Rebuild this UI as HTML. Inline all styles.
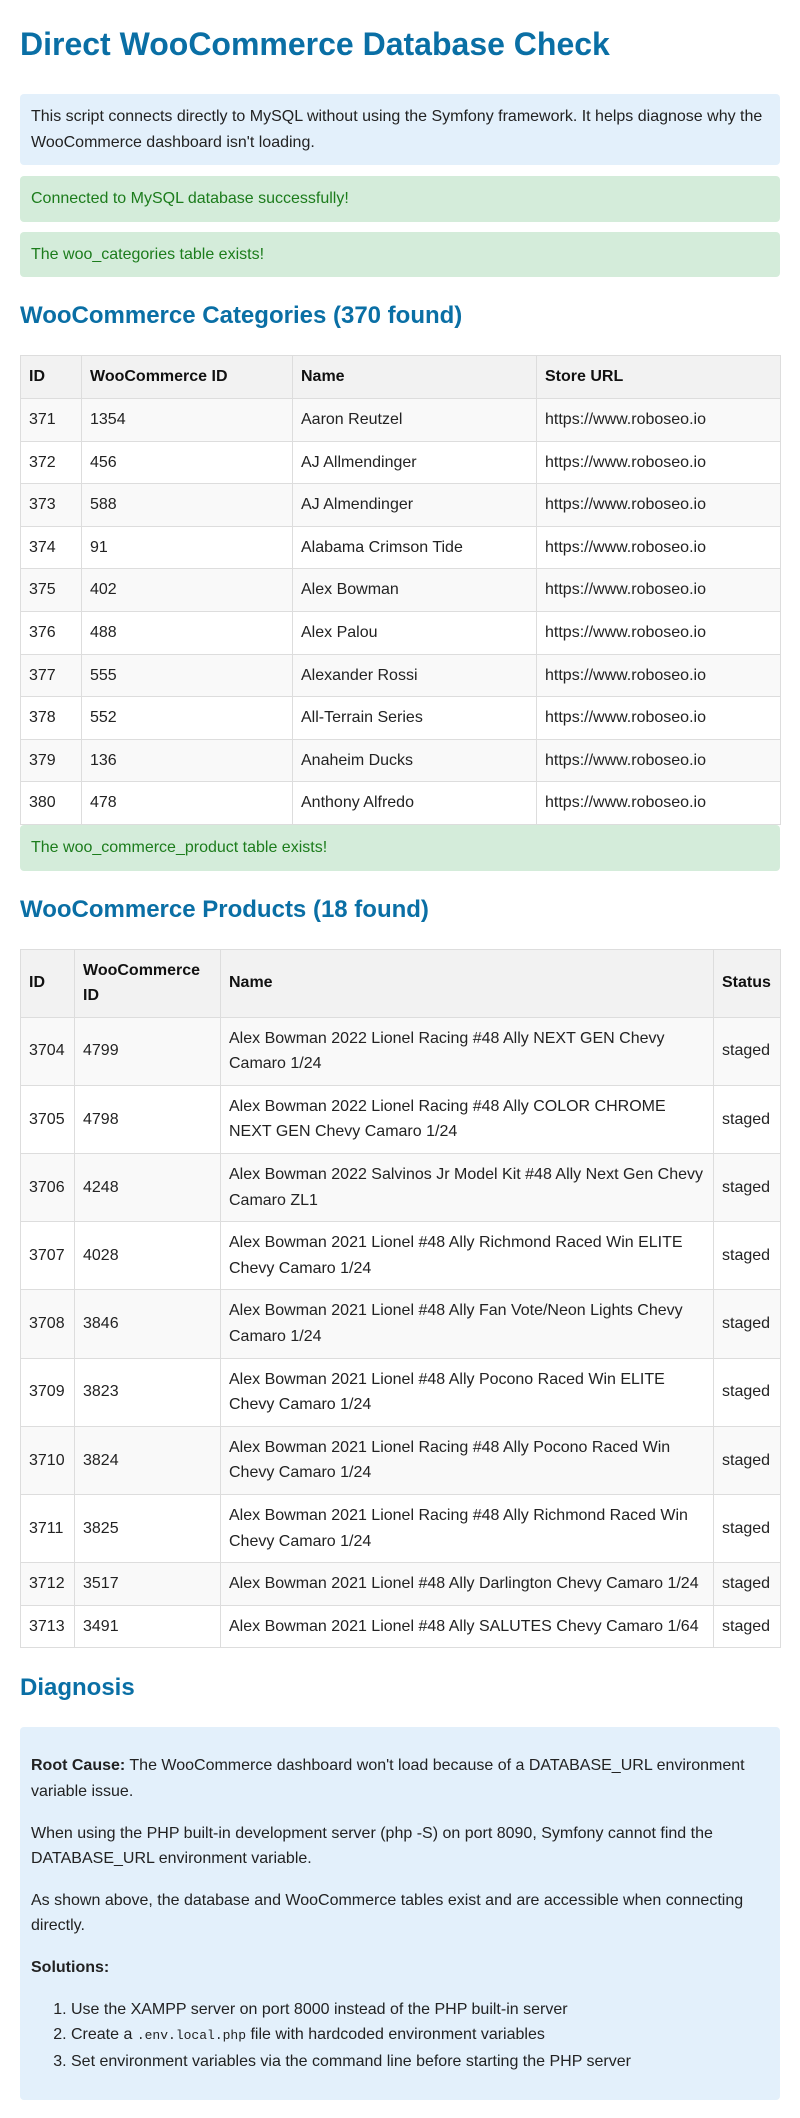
<!DOCTYPE html>
<html><head><meta charset="utf-8">
<style>
html,body{margin:0;padding:0;background:#fff}
body{font-family:"Liberation Sans",Arial,sans-serif;font-size:16px;line-height:25.6px;color:#222;padding:0 20px;width:760px}
h1{font-size:32px;line-height:37px;color:#0a6fa5;margin:0;padding-top:26px;margin-bottom:31px;font-weight:bold}
h2{font-size:24px;line-height:28px;color:#0a6fa5;margin:25px 0;font-weight:bold}
.info{background:#e3f0fb;padding:10px 11px;border-radius:4px;margin-bottom:11px}
.ok{background:#d4ecda;color:#1c7c1c;padding:10px 11px;border-radius:4px;margin-bottom:10px}
table{border-collapse:collapse;table-layout:fixed;width:760px}
th,td{border:1px solid #ddd;padding:8px;text-align:left;vertical-align:middle}
th{background:#f2f2f2;font-weight:bold;color:#111}
tr:nth-child(even) td{background:#f9f9f9}
.diag{background:#e3f0fb;padding:10px 11px;border-radius:4px}
.diag p{margin:16px 0}
.diag ol{margin:16px 0;padding-left:40px}
code{font-family:"Liberation Mono",monospace;font-size:13px}
</style></head><body>
<h1>Direct WooCommerce Database Check</h1>
<div class="info">This script connects directly to MySQL without using the Symfony framework. It helps diagnose why the WooCommerce dashboard isn't loading.</div>
<div class="ok">Connected to MySQL database successfully!</div>
<div class="ok">The woo_categories table exists!</div>
<h2>WooCommerce Categories (370 found)</h2>
<table>
<colgroup><col style="width:61px"><col style="width:211px"><col style="width:244px"><col style="width:244px"></colgroup>
<tr><th>ID</th><th>WooCommerce ID</th><th>Name</th><th>Store URL</th></tr>
<tr><td>371</td><td>1354</td><td>Aaron Reutzel</td><td>https://www.roboseo.io</td></tr>
<tr><td>372</td><td>456</td><td>AJ Allmendinger</td><td>https://www.roboseo.io</td></tr>
<tr><td>373</td><td>588</td><td>AJ Almendinger</td><td>https://www.roboseo.io</td></tr>
<tr><td>374</td><td>91</td><td>Alabama Crimson Tide</td><td>https://www.roboseo.io</td></tr>
<tr><td>375</td><td>402</td><td>Alex Bowman</td><td>https://www.roboseo.io</td></tr>
<tr><td>376</td><td>488</td><td>Alex Palou</td><td>https://www.roboseo.io</td></tr>
<tr><td>377</td><td>555</td><td>Alexander Rossi</td><td>https://www.roboseo.io</td></tr>
<tr><td>378</td><td>552</td><td>All-Terrain Series</td><td>https://www.roboseo.io</td></tr>
<tr><td>379</td><td>136</td><td>Anaheim Ducks</td><td>https://www.roboseo.io</td></tr>
<tr><td>380</td><td>478</td><td>Anthony Alfredo</td><td>https://www.roboseo.io</td></tr>
</table>
<div class="ok">The woo_commerce_product table exists!</div>
<h2>WooCommerce Products (18 found)</h2>
<table>
<colgroup><col style="width:54px"><col style="width:146px"><col style="width:493px"><col style="width:67px"></colgroup>
<tr><th>ID</th><th>WooCommerce ID</th><th>Name</th><th>Status</th></tr>
<tr><td>3704</td><td>4799</td><td>Alex Bowman 2022 Lionel Racing #48 Ally NEXT GEN Chevy Camaro 1/24</td><td>staged</td></tr>
<tr><td>3705</td><td>4798</td><td>Alex Bowman 2022 Lionel Racing #48 Ally COLOR CHROME NEXT GEN Chevy Camaro 1/24</td><td>staged</td></tr>
<tr><td>3706</td><td>4248</td><td>Alex Bowman 2022 Salvinos Jr Model Kit #48 Ally Next Gen Chevy Camaro ZL1</td><td>staged</td></tr>
<tr><td>3707</td><td>4028</td><td>Alex Bowman 2021 Lionel #48 Ally Richmond Raced Win ELITE Chevy Camaro 1/24</td><td>staged</td></tr>
<tr><td>3708</td><td>3846</td><td>Alex Bowman 2021 Lionel #48 Ally Fan Vote/Neon Lights Chevy Camaro 1/24</td><td>staged</td></tr>
<tr><td>3709</td><td>3823</td><td>Alex Bowman 2021 Lionel #48 Ally Pocono Raced Win ELITE Chevy Camaro 1/24</td><td>staged</td></tr>
<tr><td>3710</td><td>3824</td><td>Alex Bowman 2021 Lionel Racing #48 Ally Pocono Raced Win Chevy Camaro 1/24</td><td>staged</td></tr>
<tr><td>3711</td><td>3825</td><td>Alex Bowman 2021 Lionel Racing #48 Ally Richmond Raced Win Chevy Camaro 1/24</td><td>staged</td></tr>
<tr><td>3712</td><td>3517</td><td>Alex Bowman 2021 Lionel #48 Ally Darlington Chevy Camaro 1/24</td><td>staged</td></tr>
<tr><td>3713</td><td>3491</td><td>Alex Bowman 2021 Lionel #48 Ally SALUTES Chevy Camaro 1/64</td><td>staged</td></tr>
</table>
<h2 style="margin-top:26px">Diagnosis</h2>
<div class="diag">
<p><strong>Root Cause:</strong> The WooCommerce dashboard won't load because of a DATABASE_URL environment variable issue.</p>
<p>When using the PHP built-in development server (php -S) on port 8090, Symfony cannot find the DATABASE_URL environment variable.</p>
<p>As shown above, the database and WooCommerce tables exist and are accessible when connecting directly.</p>
<p><strong>Solutions:</strong></p>
<ol>
<li>Use the XAMPP server on port 8000 instead of the PHP built-in server</li>
<li>Create a <code>.env.local.php</code> file with hardcoded environment variables</li>
<li>Set environment variables via the command line before starting the PHP server</li>
</ol>
</div>
</body></html>
